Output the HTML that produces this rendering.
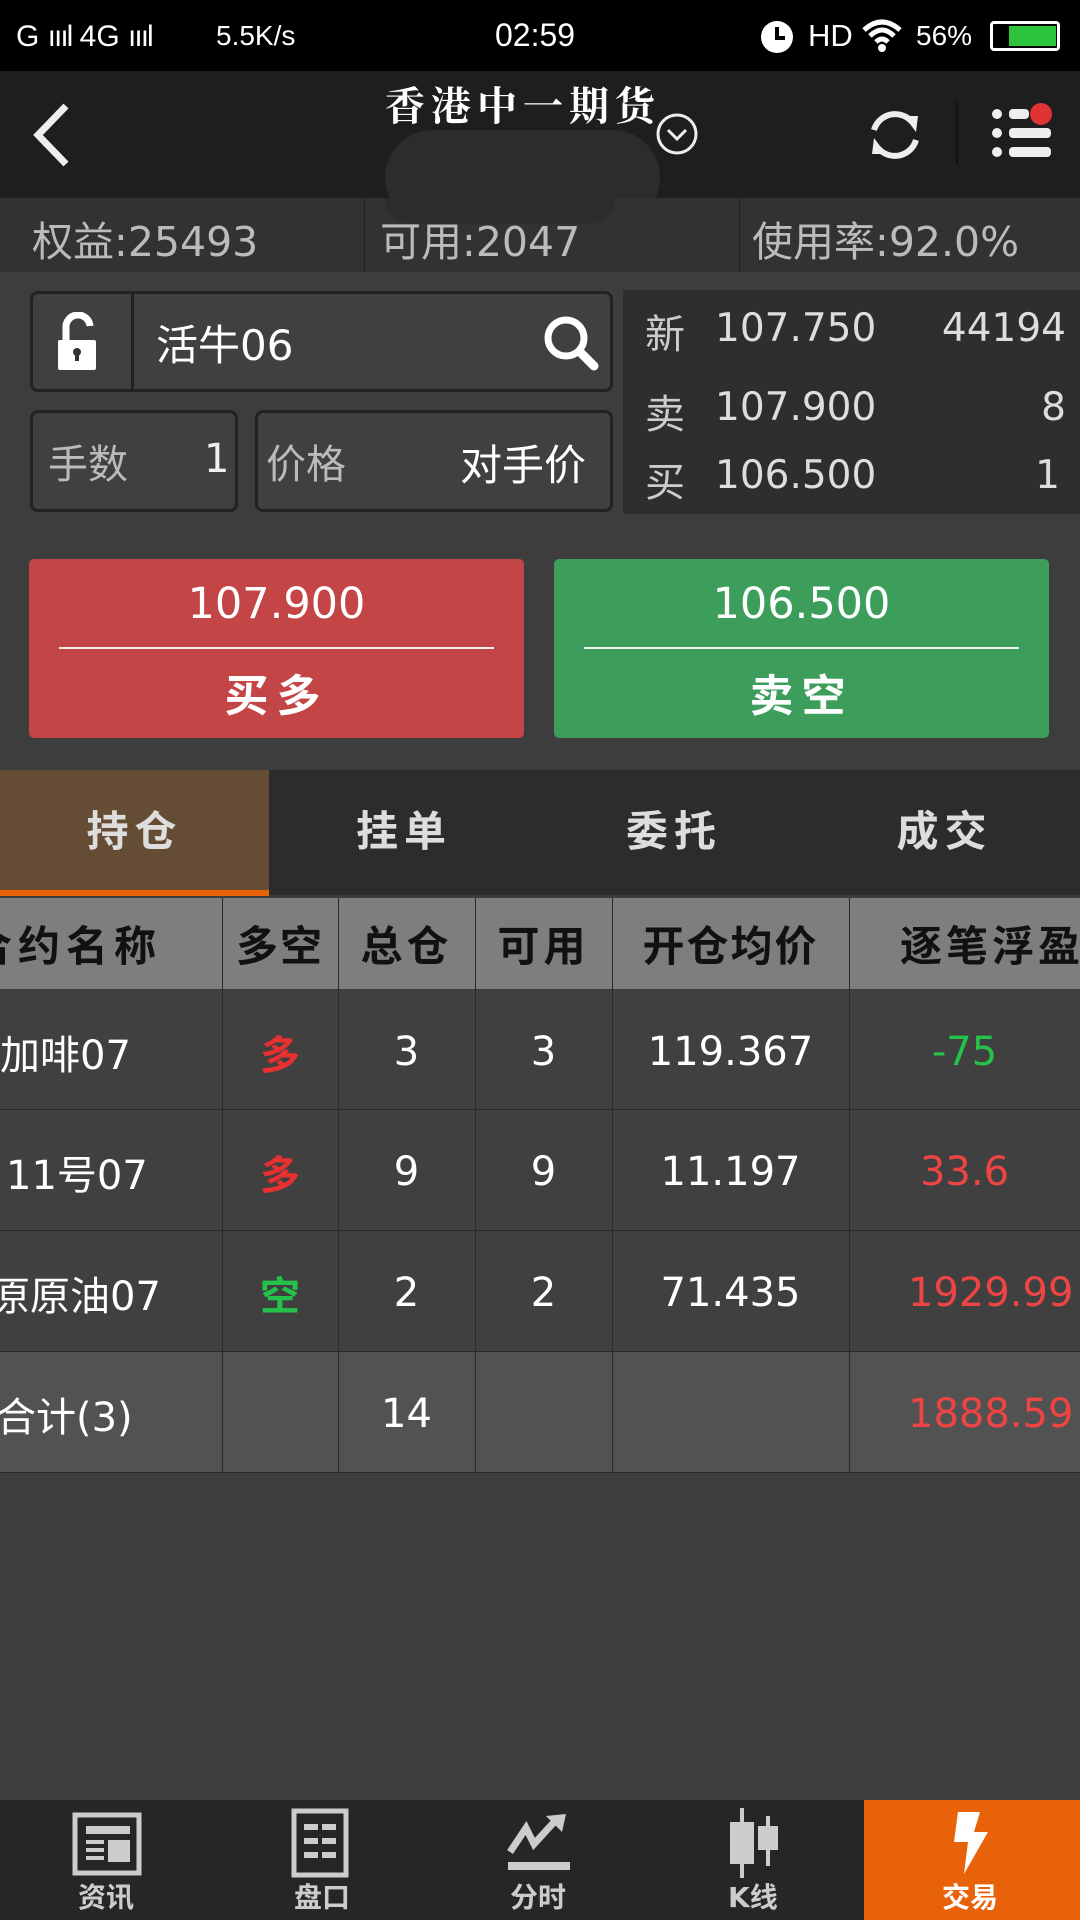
<!DOCTYPE html>
<html><head><meta charset="utf-8"><style>
*{margin:0;padding:0;box-sizing:border-box}
body{width:1080px;height:1920px;background:#3d3d3d;position:relative;overflow:hidden;font-family:"DejaVu Sans","Liberation Sans","Noto Sans CJK SC",sans-serif;color:#fff}
.a{position:absolute}
.t{display:flex;align-items:center;justify-content:center}
.cell{position:absolute;display:flex;align-items:center;justify-content:center;font-size:40px}
</style></head><body>
<!-- status bar -->
<div class="a" style="left:0;top:0;width:1080px;height:71px;background:#000"></div>
<div class="a" style="left:16px;top:20px;font-size:30px;font-family:'Liberation Sans',sans-serif">G <span style="letter-spacing:-2px">ıııl</span> 4G <span style="letter-spacing:-2px">ıııl</span></div>
<div class="a" style="left:216px;top:20px;font-size:28px;font-family:'Liberation Sans',sans-serif">5.5K/s</div>
<div class="a" style="left:495px;top:17px;font-size:32px;font-family:'Liberation Sans',sans-serif">02:59</div>
<svg class="a" style="left:758px;top:17px" width="38" height="38"><circle cx="19" cy="20" r="16" fill="#fff"/><path d="M19 10V21H27" stroke="#000" stroke-width="4" fill="none"/></svg>
<div class="a" style="left:808px;top:18px;font-size:31px;font-family:'Liberation Sans',sans-serif">HD</div>
<svg class="a" style="left:860px;top:18px" width="44" height="36" viewBox="0 0 44 36"><path d="M4 12Q22-4 40 12M10 18Q22 6 34 18M16 24Q22 18 28 24" stroke="#fff" stroke-width="5" fill="none"/><circle cx="22" cy="30" r="4" fill="#fff"/></svg>
<div class="a" style="left:916px;top:20px;font-size:28px;font-family:'Liberation Sans',sans-serif">56%</div>
<div class="a" style="left:990px;top:21px;width:70px;height:30px;border:3px solid #fff;border-radius:4px"><div style="position:absolute;left:16px;top:2px;width:47px;height:20px;background:#2cc43a"></div></div>
<!-- header -->
<div class="a" style="left:0;top:71px;width:1080px;height:127px;background:#1e1e1e"></div>
<svg class="a" style="left:30px;top:100px" width="45" height="70"><path d="M36 6L8 35L36 64" stroke="#eee" stroke-width="7" fill="none"/></svg>
<div class="a" style="left:385px;top:75px;font-size:40px;font-weight:bold;letter-spacing:6px;font-family:'Noto Serif CJK SC',serif">香港中一期货</div>
<div class="a" style="left:385px;top:130px;width:275px;height:95px;border-radius:48px;background:#2c2c2c"></div>
<svg class="a" style="left:655px;top:112px" width="44" height="44"><circle cx="22" cy="22" r="19" stroke="#eee" stroke-width="3" fill="none"/><path d="M13 18L22 27L31 18" stroke="#eee" stroke-width="3" fill="none"/></svg>
<svg class="a" style="left:866px;top:106px" width="58" height="58" viewBox="0 0 58 58"><path d="M8 24A22 22 0 0 1 46 16" stroke="#eee" stroke-width="6" fill="none"/><path d="M38 10L52 10L50 26Z" fill="#eee"/><path d="M50 34A22 22 0 0 1 12 42" stroke="#eee" stroke-width="6" fill="none"/><path d="M20 48L6 48L8 32Z" fill="#eee"/></svg>
<div class="a" style="left:956px;top:102px;width:2px;height:62px;background:#111"></div>
<svg class="a" style="left:985px;top:100px" width="70" height="62"><circle cx="12" cy="14" r="5" fill="#eee"/><circle cx="12" cy="33" r="5" fill="#eee"/><circle cx="12" cy="52" r="5" fill="#eee"/><rect x="24" y="9" width="20" height="10" rx="4" fill="#eee"/><rect x="24" y="28" width="42" height="10" rx="4" fill="#eee"/><rect x="24" y="47" width="42" height="10" rx="4" fill="#eee"/><circle cx="56" cy="14" r="11" fill="#e03434"/></svg>
<!-- info row -->
<div class="a" style="left:0;top:198px;width:1080px;height:74px;background:#323232"></div>
<div class="a" style="left:364px;top:198px;width:1px;height:74px;background:#222"></div>
<div class="a" style="left:739px;top:198px;width:1px;height:74px;background:#222"></div>
<div class="a" style="left:385px;top:198px;width:230px;height:26px;border-radius:0 0 60px 60px;background:#2c2c2c"></div>
<div class="a" style="left:32px;top:208px;font-size:41px;color:#bbb">权益:25493</div>
<div class="a" style="left:380px;top:208px;font-size:41px;color:#bbb">可用:2047</div>
<div class="a" style="left:752px;top:208px;font-size:41px;color:#bbb">使用率:92.0%</div>
<!-- search box -->
<div class="a" style="left:30px;top:291px;width:583px;height:101px;border:3px solid #222;border-radius:8px;background:#404040"></div>
<div class="a" style="left:131px;top:294px;width:3px;height:95px;background:#222"></div>
<svg class="a" style="left:56px;top:312px" width="46" height="62"><path d="M10 28V16A12 12 0 0 1 34 14" stroke="#fff" stroke-width="7" fill="none"/><rect x="2" y="28" width="38" height="30" rx="2" fill="#fff"/><circle cx="21" cy="40" r="4" fill="#333"/><rect x="19" y="40" width="4" height="9" fill="#333"/></svg>
<div class="a" style="left:156px;top:312px;font-size:42px">活牛06</div>
<svg class="a" style="left:540px;top:312px" width="62" height="62"><circle cx="26" cy="26" r="18" stroke="#fff" stroke-width="7" fill="none"/><path d="M40 40L54 54" stroke="#fff" stroke-width="9" stroke-linecap="round"/></svg>
<div class="a" style="left:30px;top:410px;width:208px;height:102px;border:3px solid #222;border-radius:8px;background:#404040"></div>
<div class="a" style="left:48px;top:432px;font-size:40px;color:#bbb">手数</div>
<div class="a" style="left:204px;top:436px;font-size:40px;color:#eee">1</div>
<div class="a" style="left:255px;top:410px;width:358px;height:102px;border:3px solid #222;border-radius:8px;background:#404040"></div>
<div class="a" style="left:266px;top:432px;font-size:40px;color:#bbb">价格</div>
<div class="a" style="left:460px;top:432px;font-size:42px;color:#fff">对手价</div>
<!-- quote -->
<div class="a" style="left:623px;top:290px;width:457px;height:224px;background:#2e2e2e"></div>
<div class="a" style="left:645px;top:302px;font-size:40px;color:#ccc">新</div>
<div class="a" style="left:715px;top:306px;font-size:39px;color:#ddd">107.750</div>
<div class="a" style="right:14px;top:306px;font-size:39px;color:#ddd">44194</div>
<div class="a" style="left:645px;top:382px;font-size:40px;color:#ccc">卖</div>
<div class="a" style="left:715px;top:385px;font-size:39px;color:#ddd">107.900</div>
<div class="a" style="right:14px;top:385px;font-size:39px;color:#ddd">8</div>
<div class="a" style="left:645px;top:450px;font-size:40px;color:#ccc">买</div>
<div class="a" style="left:715px;top:453px;font-size:39px;color:#ddd">106.500</div>
<div class="a" style="right:20px;top:453px;font-size:39px;color:#ddd">1</div>
<!-- buttons -->
<div class="a" style="left:29px;top:559px;width:495px;height:179px;background:#c34545;border-radius:5px"></div>
<div class="a t" style="left:29px;top:576px;width:495px;height:56px;font-size:43px">107.900</div>
<div class="a" style="left:59px;top:647px;width:435px;height:2px;background:#eee"></div>
<div class="a t" style="left:29px;top:662px;width:495px;height:60px;font-size:44px;font-weight:bold;letter-spacing:8px">买多</div>
<div class="a" style="left:554px;top:559px;width:495px;height:179px;background:#3d9e5c;border-radius:5px"></div>
<div class="a t" style="left:554px;top:576px;width:495px;height:56px;font-size:43px">106.500</div>
<div class="a" style="left:584px;top:647px;width:435px;height:2px;background:#eee"></div>
<div class="a t" style="left:554px;top:662px;width:495px;height:60px;font-size:44px;font-weight:bold;letter-spacing:8px">卖空</div>
<!-- tabs -->
<div class="a" style="left:0;top:770px;width:1080px;height:125px;background:#2c2c2c"></div>
<div class="a" style="left:0;top:770px;width:269px;height:125px;background:#654c34"></div>
<div class="a" style="left:0;top:890px;width:269px;height:6px;background:#e8620a"></div>
<div class="a t" style="left:0;top:768px;width:269px;height:120px;font-size:42px;font-weight:bold;color:#ddd;letter-spacing:6px">持仓</div>
<div class="a t" style="left:269px;top:768px;width:270px;height:120px;font-size:42px;font-weight:bold;color:#ddd;letter-spacing:6px">挂单</div>
<div class="a t" style="left:539px;top:768px;width:270px;height:120px;font-size:42px;font-weight:bold;color:#ddd;letter-spacing:6px">委托</div>
<div class="a t" style="left:809px;top:768px;width:271px;height:120px;font-size:42px;font-weight:bold;color:#ddd;letter-spacing:6px">成交</div>
<!-- table -->
<div class="a" style="left:0;top:898px;width:1080px;height:91px;background:#7e7e7e"></div>
<div class="a" style="left:0;top:989px;width:1080px;height:363px;background:#404040"></div>
<div class="a" style="left:0;top:1352px;width:1080px;height:120px;background:#525252"></div>
<div class="a" style="left:0;top:1109px;width:1080px;height:1px;background:#2a2a2a"></div>
<div class="a" style="left:0;top:1230px;width:1080px;height:1px;background:#2a2a2a"></div>
<div class="a" style="left:0;top:1351px;width:1080px;height:1px;background:#2a2a2a"></div>
<div class="a" style="left:0;top:1472px;width:1080px;height:1px;background:#2a2a2a"></div>
<div class="a" style="left:222px;top:898px;width:1px;height:574px;background:#2a2a2a"></div>
<div class="a" style="left:338px;top:898px;width:1px;height:574px;background:#2a2a2a"></div>
<div class="a" style="left:475px;top:898px;width:1px;height:574px;background:#2a2a2a"></div>
<div class="a" style="left:612px;top:898px;width:1px;height:574px;background:#2a2a2a"></div>
<div class="a" style="left:849px;top:898px;width:1px;height:574px;background:#2a2a2a"></div>
<div class="cell" style="left:-30px;top:898px;width:220px;height:91px;color:#111;font-weight:bold;letter-spacing:6px;justify-content:flex-start;font-size:42px">合约名称</div>
<div class="cell" style="left:222px;top:898px;width:116px;height:91px;color:#111;font-weight:bold;letter-spacing:2px;font-size:42px">多空</div>
<div class="cell" style="left:338px;top:898px;width:137px;height:91px;color:#111;font-weight:bold;letter-spacing:4px;font-size:42px">总仓</div>
<div class="cell" style="left:475px;top:898px;width:137px;height:91px;color:#111;font-weight:bold;letter-spacing:4px;font-size:42px">可用</div>
<div class="cell" style="left:612px;top:898px;width:237px;height:91px;color:#111;font-weight:bold;letter-spacing:2px;font-size:42px">开仓均价</div>
<div class="cell" style="left:900px;top:898px;width:220px;height:91px;color:#111;font-weight:bold;letter-spacing:4px;justify-content:flex-start;font-size:42px">逐笔浮盈</div>
<!-- rows -->
<div class="cell" style="left:0;top:992px;height:120px;justify-content:flex-start">加啡07</div>
<div class="cell" style="left:222px;top:992px;width:116px;height:120px;color:#e83030;font-weight:bold">多</div>
<div class="cell" style="left:338px;top:992px;width:137px;height:120px">3</div>
<div class="cell" style="left:475px;top:992px;width:137px;height:120px">3</div>
<div class="cell" style="left:612px;top:992px;width:237px;height:120px">119.367</div>
<div class="cell" style="left:849px;top:992px;width:231px;height:120px;color:#25c24a">-75</div>
<div class="cell" style="left:6px;top:1112px;height:120px;justify-content:flex-start">11号07</div>
<div class="cell" style="left:222px;top:1112px;width:116px;height:120px;color:#e83030;font-weight:bold">多</div>
<div class="cell" style="left:338px;top:1112px;width:137px;height:120px">9</div>
<div class="cell" style="left:475px;top:1112px;width:137px;height:120px">9</div>
<div class="cell" style="left:612px;top:1112px;width:237px;height:120px">11.197</div>
<div class="cell" style="left:849px;top:1112px;width:231px;height:120px;color:#ee4444">33.6</div>
<div class="cell" style="left:-10px;top:1233px;height:120px;justify-content:flex-start">原原油07</div>
<div class="cell" style="left:222px;top:1233px;width:116px;height:120px;color:#25c24a;font-weight:bold">空</div>
<div class="cell" style="left:338px;top:1233px;width:137px;height:120px">2</div>
<div class="cell" style="left:475px;top:1233px;width:137px;height:120px">2</div>
<div class="cell" style="left:612px;top:1233px;width:237px;height:120px">71.435</div>
<div class="cell" style="left:908px;top:1233px;height:120px;color:#ee4444;justify-content:flex-start">1929.99</div>
<div class="cell" style="left:-4px;top:1354px;height:120px;justify-content:flex-start">合计(3)</div>
<div class="cell" style="left:338px;top:1354px;width:137px;height:120px">14</div>
<div class="cell" style="left:908px;top:1354px;height:120px;color:#ee4444;justify-content:flex-start">1888.59</div>
<!-- bottom nav -->
<div class="a" style="left:0;top:1800px;width:1080px;height:120px;background:#262626"></div>
<div class="a" style="left:864px;top:1800px;width:216px;height:120px;background:#e8620a"></div>
<svg class="a" style="left:72px;top:1812px" width="72" height="66"><rect x="3" y="3" width="64" height="58" fill="none" stroke="#ccc" stroke-width="5"/><rect x="14" y="14" width="44" height="8" fill="#ccc"/><rect x="14" y="28" width="18" height="4" fill="#ccc"/><rect x="14" y="36" width="18" height="4" fill="#ccc"/><rect x="14" y="44" width="18" height="4" fill="#ccc"/><rect x="36" y="28" width="22" height="22" fill="#ccc"/></svg>
<div class="a" style="left:78px;top:1876px;font-size:28px;color:#ccc;font-weight:bold">资讯</div>
<svg class="a" style="left:290px;top:1808px" width="64" height="70"><rect x="4" y="3" width="52" height="64" fill="none" stroke="#ccc" stroke-width="5"/><rect x="14" y="16" width="14" height="6" fill="#ccc"/><rect x="32" y="16" width="14" height="6" fill="#ccc"/><rect x="14" y="30" width="14" height="6" fill="#ccc"/><rect x="32" y="30" width="14" height="6" fill="#ccc"/><rect x="14" y="44" width="14" height="6" fill="#ccc"/><rect x="32" y="44" width="14" height="6" fill="#ccc"/></svg>
<div class="a" style="left:294px;top:1876px;font-size:28px;color:#ccc;font-weight:bold">盘口</div>
<svg class="a" style="left:504px;top:1812px" width="72" height="64"><path d="M6 40L22 16L30 32L52 8" stroke="#ccc" stroke-width="7" fill="none"/><path d="M42 4L62 2L58 20Z" fill="#ccc"/><rect x="4" y="50" width="62" height="8" fill="#ccc"/></svg>
<div class="a" style="left:510px;top:1876px;font-size:28px;color:#ccc;font-weight:bold">分时</div>
<svg class="a" style="left:722px;top:1808px" width="64" height="72"><rect x="18" y="0" width="4" height="70" fill="#ccc"/><rect x="8" y="14" width="24" height="42" fill="#ccc"/><rect x="44" y="8" width="4" height="50" fill="#ccc"/><rect x="36" y="18" width="20" height="24" fill="#ccc"/></svg>
<div class="a" style="left:728px;top:1876px;font-size:28px;color:#ccc;font-weight:bold">K线</div>
<svg class="a" style="left:944px;top:1810px" width="56" height="66"><path d="M14 2H36L30 22H44L20 64L24 32H10Z" fill="#fff"/></svg>
<div class="a" style="left:942px;top:1876px;font-size:28px;color:#fff;font-weight:bold">交易</div>
</body></html>
